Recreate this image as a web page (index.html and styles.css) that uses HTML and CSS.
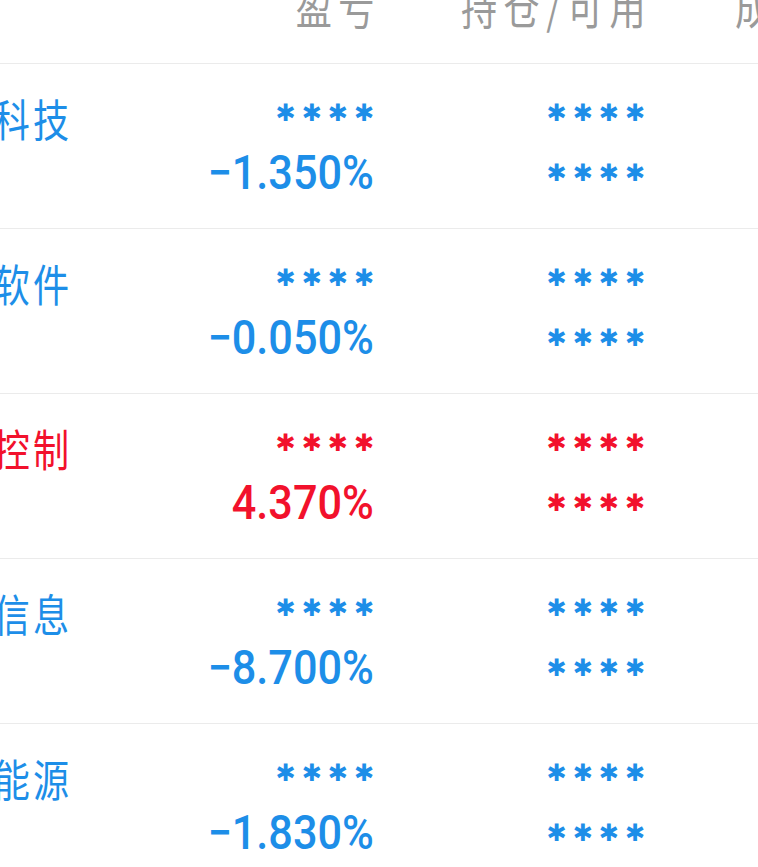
FILE: index.html
```html
<!DOCTYPE html>
<html lang="zh-CN">
<head>
<meta charset="utf-8">
<title>持仓</title>
<link rel="stylesheet" href="styles.css">
</head>
<body>
<div class="viewport">
  <div class="table">
    <div class="row head">
      <div class="cell c-name"><span class="cjk">名称/市值</span></div>
      <div class="cell c-num"><span class="cjk">盈亏</span></div>
      <div class="cell c-num c-pos"><span class="cjk">持仓/可用</span></div>
      <div class="cell c-num c-cost"><span class="cjk">成本/现价</span></div>
    </div>

    <div class="row down">
      <div class="cell c-name"><span class="cjk name">远景科技</span></div>
      <div class="cell c-num"><div class="line"><span class="mask">✱✱✱✱</span></div><div class="line"><span class="pct">−1.350%</span></div></div>
      <div class="cell c-num c-pos"><div class="line"><span class="mask">✱✱✱✱</span></div><div class="line"><span class="mask">✱✱✱✱</span></div></div>
      <div class="cell c-num c-cost"><div class="line"><span class="mask">✱✱✱✱</span></div><div class="line"><span class="mask">✱✱✱✱</span></div></div>
    </div>

    <div class="row down">
      <div class="cell c-name"><span class="cjk name">金桥软件</span></div>
      <div class="cell c-num"><div class="line"><span class="mask">✱✱✱✱</span></div><div class="line"><span class="pct">−0.050%</span></div></div>
      <div class="cell c-num c-pos"><div class="line"><span class="mask">✱✱✱✱</span></div><div class="line"><span class="mask">✱✱✱✱</span></div></div>
      <div class="cell c-num c-cost"><div class="line"><span class="mask">✱✱✱✱</span></div><div class="line"><span class="mask">✱✱✱✱</span></div></div>
    </div>

    <div class="row up">
      <div class="cell c-name"><span class="cjk name">智能控制</span></div>
      <div class="cell c-num"><div class="line"><span class="mask">✱✱✱✱</span></div><div class="line"><span class="pct">4.370%</span></div></div>
      <div class="cell c-num c-pos"><div class="line"><span class="mask">✱✱✱✱</span></div><div class="line"><span class="mask">✱✱✱✱</span></div></div>
      <div class="cell c-num c-cost"><div class="line"><span class="mask">✱✱✱✱</span></div><div class="line"><span class="mask">✱✱✱✱</span></div></div>
    </div>

    <div class="row down">
      <div class="cell c-name"><span class="cjk name">通达信息</span></div>
      <div class="cell c-num"><div class="line"><span class="mask">✱✱✱✱</span></div><div class="line"><span class="pct">−8.700%</span></div></div>
      <div class="cell c-num c-pos"><div class="line"><span class="mask">✱✱✱✱</span></div><div class="line"><span class="mask">✱✱✱✱</span></div></div>
      <div class="cell c-num c-cost"><div class="line"><span class="mask">✱✱✱✱</span></div><div class="line"><span class="mask">✱✱✱✱</span></div></div>
    </div>

    <div class="row down">
      <div class="cell c-name"><span class="cjk name">新和能源</span></div>
      <div class="cell c-num"><div class="line"><span class="mask">✱✱✱✱</span></div><div class="line"><span class="pct">−1.830%</span></div></div>
      <div class="cell c-num c-pos"><div class="line"><span class="mask">✱✱✱✱</span></div><div class="line"><span class="mask">✱✱✱✱</span></div></div>
      <div class="cell c-num c-cost"><div class="line"><span class="mask">✱✱✱✱</span></div><div class="line"><span class="mask">✱✱✱✱</span></div></div>
    </div>
  </div>
</div>
</body>
</html>
```

FILE: styles.css
```css
html, body {
  margin: 0;
  padding: 0;
  background: #ffffff;
}

body {
  width: 758px;
  height: 867px;
  overflow: hidden;
  font-family: Roboto, "Noto Sans CJK SC", sans-serif;
}

.viewport {
  width: 758px;
  height: 867px;
  overflow: hidden;
}

.table {
  margin-left: -85px;
  width: 1120px;
}

.row {
  display: flex;
  height: 165px;
  box-sizing: border-box;
  border-bottom: 1px solid #ebebeb;
}

.head {
  height: 64px;
  align-items: flex-end;
  padding-bottom: 35px;
  color: #9a9a9a;
}

.head .cell {
  line-height: 44px;
  height: 44px;
}

.cell {
  flex: none;
  box-sizing: border-box;
}

.c-name {
  width: 209px;
  text-align: left;
  padding-top: 24px;
}

.head .c-name {
  padding-top: 0;
  visibility: hidden;
}

.c-num {
  width: 250px;
  text-align: right;
  padding-top: 19px;
}

.head .c-num {
  padding-top: 0;
}

.c-pos {
  width: 271px;
}

.c-cost {
  width: 274px;
}

.cjk {
  display: inline-block;
  font-family: "Noto Sans CJK SC", sans-serif;
  font-size: 44px;
  line-height: 60px;
  letter-spacing: 4px;
  margin-right: -3px;
  white-space: nowrap;
  transform: scaleX(0.82);
  transform-origin: right center;
}

.head .cjk {
  line-height: 44px;
  letter-spacing: 8px;
  margin-right: -7px;
}

.name {
  transform-origin: left center;
}

.line {
  height: 60px;
  line-height: 60px;
  white-space: nowrap;
}

.pct {
  display: inline-block;
  font-family: Roboto, sans-serif;
  font-size: 48px;
  font-weight: 500;
  transform: scaleX(0.9);
  transform-origin: right center;
}

.mask {
  font-family: "DejaVu Sans", sans-serif;
  font-size: 24px;
  font-weight: 700;
  letter-spacing: 6px;
  margin-right: -6px;
}

.down {
  color: #1d8ee8;
}

.up {
  color: #f2112c;
}
```
